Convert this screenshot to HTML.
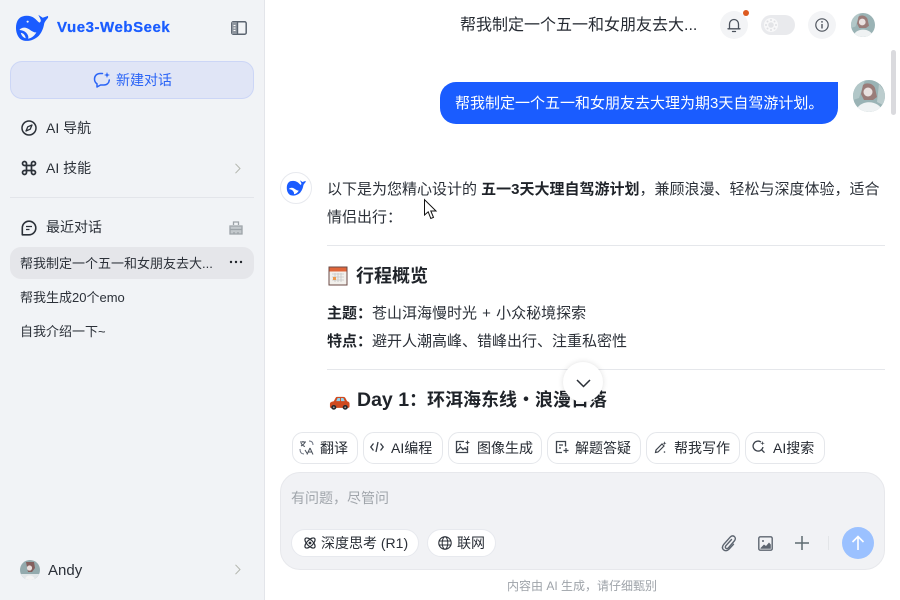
<!DOCTYPE html>
<html lang="zh-CN">
<head>
<meta charset="utf-8">
<title>Vue3-WebSeek</title>
<style>
*{box-sizing:border-box}
html,body{margin:0;padding:0;width:900px;height:600px;overflow:hidden;background:#fff}
body{font-family:"Liberation Sans","Noto Sans CJK SC",sans-serif;color:#1f2329;position:relative}
.a{position:absolute;white-space:nowrap}
svg{display:block;position:absolute;overflow:visible}
.chip{position:absolute;top:432px;height:32px;border:1px solid #e5e7eb;border-radius:11px;background:#fff;font-size:14px;line-height:30px;color:#262b33;white-space:nowrap}
.chip span{position:absolute;top:0}
.pill{position:absolute;top:529px;height:28px;border:1px solid #e7e9ee;border-radius:14px;background:#fff}
</style>
</head>
<body>
<!-- Sidebar -->
<div class="a" style="left:0;top:0;width:265px;height:600px;background:#f1f3f6;border-right:1px solid #e3e5ea"></div>

<svg style="left:15px;top:14px" width="35" height="28" viewBox="0 0 36 28">
<path fill="#1a5cff" d="M1 14C1 7 4 3 8 2C12 .8 17 1.500 20 4C22 5.500 23.500 7.500 25 8.500C26.500 8 27 6.500 26 4.500L24 .5L28.500 3.500L34 1.500L34 3.500C32 6 30.500 7.500 30 9.500C29.500 13 28 18 24.500 22C20 26.500 14 28 9 27C4 26 1 20 1 14Z"/>
<path fill="#f1f3f6" d="M4.500 16C6.500 13.500 10 13 13 14.500C16 16 19 19 22 18.500C20 22 17 24.500 13.500 25C14.500 22.500 12.500 19 9.500 17.300C8 16.500 6 16 4.500 16Z"/>
<path fill="#f1f3f6" d="M6 19C8 19 10.500 21 11 24.500C8.500 24 6.500 21.500 6 19Z"/>
<circle cx="13" cy="7.500" r="1.100" fill="#f1f3f6"/>
</svg>
<div class="a" style="left:57px;top:19px;font-size:15px;line-height:18px;font-weight:700;color:#1a5cff;letter-spacing:.55px;-webkit-text-stroke:.25px #1a5cff">Vue3-WebSeek</div>
<svg style="left:231px;top:21px" width="16" height="14" viewBox="0 0 16 14">
<rect x=".8" y=".8" width="14.400" height="12.400" rx="1.500" fill="none" stroke="#5b6470" stroke-width="1.500"/>
<rect x="1" y="1" width="5" height="12" fill="#8f969f"/>
<path d="M6.500 1V13" stroke="#5b6470" stroke-width="1.400"/>
<path d="M2.500 4.500H4.500M2.500 7H4.500M2.500 9.500H4.500" stroke="#fff" stroke-width="1"/>
</svg>

<div class="a" style="left:10px;top:61px;width:244px;height:38px;border-radius:12px;background:#e0e5f6;border:1px solid #ccd6f6"></div>
<svg style="left:93px;top:71px" width="18" height="18" viewBox="0 0 18 18" fill="none">
<path d="M9.500 2.500H7C3.800 2.500 1.500 4.800 1.500 8C1.500 10 2.400 11.800 4 12.800V16L7.500 14H11C14 14 16 12 16.300 9" stroke="#2a64f6" stroke-width="1.500" stroke-linecap="round" stroke-linejoin="round"/>
<path d="M14 1L14.800 3.300L17 4L14.800 4.800L14 7L13.200 4.800L11 4L13.200 3.300Z" fill="#2a64f6"/>
</svg>
<div class="a" style="left:116px;top:70px;font-size:14px;line-height:20px;color:#2a64f6">新建对话</div>

<svg style="left:21px;top:120px" width="16" height="16" viewBox="0 0 16 16" fill="none">
<circle cx="8" cy="8" r="7" stroke="#2b3038" stroke-width="1.500"/>
<path d="M11 5L9.200 9.200L5 11L6.800 6.800Z" stroke="#2b3038" stroke-width="1.300" stroke-linejoin="round"/>
</svg>
<div class="a" style="left:46px;top:118px;font-size:14px;line-height:20px;color:#2b3038">AI 导航</div>

<svg style="left:21px;top:160px" width="16" height="16" viewBox="0 0 16 16" fill="none">
<path d="M5.500 5.500H10.500V10.500H5.500ZM5.500 5.500V3.500A2 2 0 1 0 3.500 5.500H5.500ZM10.500 5.500H12.500A2 2 0 1 0 10.500 3.500V5.500ZM10.500 10.500V12.500A2 2 0 1 0 12.500 10.500H10.500ZM5.500 10.500H3.500A2 2 0 1 0 5.500 12.500V10.500Z" stroke="#2b3038" stroke-width="1.700"/>
</svg>
<div class="a" style="left:46px;top:158px;font-size:14px;line-height:20px;color:#2b3038">AI 技能</div>
<svg style="left:234px;top:163px" width="8" height="11" viewBox="0 0 8 11" fill="none"><path d="M1.500 .8L6 5.500L1.500 10.200" stroke="#b3b6ae" stroke-width="1"/></svg>

<div class="a" style="left:10px;top:197px;width:244px;height:1px;background:#e3e5ea"></div>

<svg style="left:21px;top:220px" width="16" height="16" viewBox="0 0 16 16" fill="none">
<path d="M8 1.200A6.800 6.800 0 1 1 8 14.800H1.300V8A6.700 6.700 0 0 1 8 1.200Z" stroke="#2b3038" stroke-width="1.600" stroke-linejoin="round"/>
<path d="M5 6.500H11M5 9.500H8.500" stroke="#2b3038" stroke-width="1.300"/>
</svg>
<div class="a" style="left:46px;top:217px;font-size:14px;line-height:20px;color:#2b3038">最近对话</div>
<svg style="left:229px;top:220px" width="14" height="15" viewBox="0 0 14 15" fill="none">
<path d="M1 8L2.500 6H11.500L13 8V14H1Z" fill="#c3c8cc"/>
<path d="M4.500 5V2H9.500V5M1 6H13V14H1ZM1 9.500H13M5 12V14M9 12V14" stroke="#9da3a8" stroke-width="1.300"/>
</svg>

<div class="a" style="left:10px;top:247px;width:244px;height:32px;border-radius:11px;background:#e5e6ea"></div>
<div class="a" style="left:20px;top:255px;font-size:13px;line-height:18px;color:#2b3038">帮我制定一个五一和女朋友去大...</div>
<svg style="left:229px;top:260px" width="14" height="4" viewBox="0 0 14 4"><circle cx="2" cy="2" r="1.200" fill="#20242a"/><circle cx="7" cy="2" r="1.200" fill="#20242a"/><circle cx="12" cy="2" r="1.200" fill="#20242a"/></svg>
<div class="a" style="left:20px;top:289px;font-size:13px;line-height:18px;color:#2b3038">帮我生成20个emo</div>
<div class="a" style="left:20px;top:323px;font-size:13px;line-height:18px;color:#2b3038">自我介绍一下~</div>

<svg style="left:20px;top:560px" width="20" height="20" viewBox="0 0 20 20">
<defs><clipPath id="c1"><circle cx="10" cy="10" r="10"/></clipPath></defs>
<g clip-path="url(#c1)"><rect width="20" height="20" fill="#93aaad"/><rect y="14" width="20" height="6" fill="#e2e6e8"/><path d="M6 2H14L15 8L12 12H8Z" fill="#84605e"/><circle cx="9.500" cy="8" r="2.600" fill="#e8dedc"/><path d="M5 20C5 14 14 14 15 20Z" fill="#f3f3f3"/></g>
</svg>
<div class="a" style="left:48px;top:561px;font-size:15px;line-height:20px;color:#2b3038">Andy</div>
<svg style="left:234px;top:564px" width="8" height="11" viewBox="0 0 8 11" fill="none"><path d="M1.500 .8L6 5.500L1.500 10.200" stroke="#b3b6ae" stroke-width="1"/></svg>

<!-- Header -->
<div class="a" style="left:460px;top:14px;font-size:16px;line-height:24px;color:#262b33">帮我制定一个五一和女朋友去大...</div>
<div class="a" style="left:720px;top:11px;width:28px;height:28px;border-radius:50%;background:#f3f4f6"></div>
<svg style="left:727px;top:17px" width="14" height="16" viewBox="0 0 14 16" fill="none">
<path d="M2.500 11.500V7A4.500 4.500 0 0 1 11.500 7V11.500M1 11.800H13M5.500 14.500H8.500" stroke="#4b525c" stroke-width="1.300" stroke-linecap="round"/>
</svg>
<div class="a" style="left:743px;top:10px;width:6px;height:6px;border-radius:50%;background:#dd5a20"></div>
<div class="a" style="left:761px;top:15px;width:34px;height:20px;border-radius:10px;background:#e9eaed"></div>
<svg style="left:764px;top:18px" width="14" height="14" viewBox="0 0 14 14">
<circle cx="7" cy="7" r="7" fill="#f8f8f9"/><circle cx="7" cy="7" r="2.800" fill="#e3e4e7"/>
<g fill="#dfe0e4"><circle cx="7" cy="2" r="1"/><circle cx="7" cy="12" r="1"/><circle cx="2" cy="7" r="1"/><circle cx="12" cy="7" r="1"/><circle cx="3.500" cy="3.500" r="1"/><circle cx="10.500" cy="3.500" r="1"/><circle cx="3.500" cy="10.500" r="1"/><circle cx="10.500" cy="10.500" r="1"/></g>
</svg>
<div class="a" style="left:808px;top:11px;width:28px;height:28px;border-radius:50%;background:#f3f4f6"></div>
<svg style="left:815px;top:18px" width="14" height="14" viewBox="0 0 14 14" fill="none">
<circle cx="7" cy="7" r="6.200" stroke="#50565f" stroke-width="1.200"/><path d="M7 6V10.500" stroke="#50565f" stroke-width="1.400"/><circle cx="7" cy="3.900" r=".9" fill="#50565f"/>
</svg>
<svg style="left:851px;top:13px" width="24" height="24" viewBox="0 0 32 32">
<defs><clipPath id="c2"><circle cx="16" cy="16" r="16"/></clipPath></defs>
<g clip-path="url(#c2)"><rect width="32" height="32" fill="#9ab3b5"/><path d="M0 0H12L6 18L0 20Z" fill="#b2c7c8"/><path d="M10 5C13 2 20 3 22 8L24 17L20 20H11L8 14Z" fill="#9a7c79"/><circle cx="15" cy="12" r="4.500" fill="#e9e1e0"/><path d="M3 32C4 20 26 18 30 32Z" fill="#eff2f3"/></g>
</svg>

<!-- Scrollbar -->
<div class="a" style="left:891px;top:50px;width:5px;height:65px;border-radius:3px;background:#dadade"></div>

<!-- User message -->
<div class="a" style="left:440px;top:82px;width:398px;height:42px;background:#1a5cff;border-radius:16px 0 16px 16px"></div>
<div class="a" style="left:455px;top:93px;font-size:15px;line-height:21px;color:#fff">帮我制定一个五一和女朋友去大理为期3天自驾游计划。</div>
<svg style="left:853px;top:80px" width="32" height="32" viewBox="0 0 32 32">
<defs><clipPath id="c3"><circle cx="16" cy="16" r="16"/></clipPath></defs>
<g clip-path="url(#c3)"><rect width="32" height="32" fill="#9ab3b5"/><path d="M0 0H12L6 18L0 20Z" fill="#b2c7c8"/><path d="M26 4L32 12V26L24 22Z" fill="#bccdce"/><path d="M10 5C13 2 20 3 22 8L24 17L20 20H11L8 14Z" fill="#9a7c79"/><circle cx="15" cy="12" r="4.500" fill="#e9e1e0"/><path d="M3 32C4 20 26 18 30 32Z" fill="#eff2f3"/></g>
</svg>

<!-- AI message -->
<div class="a" style="left:280px;top:172px;width:32px;height:32px;border-radius:50%;background:#fff;border:1px solid #e7e9ee"></div>
<svg style="left:286px;top:180px" width="21" height="16" viewBox="0 0 36 28">
<path fill="#1a5cff" d="M1 14C1 7 4 3 8 2C12 .8 17 1.500 20 4C22 5.500 23.500 7.500 25 8.500C26.500 8 27 6.500 26 4.500L24 .5L28.500 3.500L34 1.500L34 3.500C32 6 30.500 7.500 30 9.500C29.500 13 28 18 24.500 22C20 26.500 14 28 9 27C4 26 1 20 1 14Z"/>
<path fill="#fff" d="M4.500 16C6.500 13.500 10 13 13 14.500C16 16 19 19 22 18.500C20 22 17 24.500 13.500 25C14.500 22.500 12.500 19 9.500 17.300C8 16.500 6 16 4.500 16Z"/>
</svg>
<div class="a" style="left:327px;top:176px;width:558px;font-size:15px;line-height:28px;color:#2b3038;white-space:normal">以下是为您精心设计的 <b style="color:#1f2329">五一3天大理自驾游计划</b>，兼顾浪漫、轻松与深度体验，适合情侣出行：</div>
<div class="a" style="left:327px;top:245px;width:558px;height:1px;background:#e5e7eb"></div>

<svg style="left:328px;top:266px" width="20" height="20" viewBox="0 0 20 20">
<rect x=".5" y=".5" width="19" height="19" fill="#6b4a44"/><rect x="1.500" y="1.500" width="17" height="17" fill="#f2f0ec"/><rect x="1.500" y="1.500" width="17" height="4" fill="#e0663a"/>
<path d="M4 8H16M4 11H16M4 14H16M7 7V16M10 7V16M13 7V16" stroke="#c6c6c6" stroke-width=".8"/><rect x="5" y="11" width="3" height="3" fill="#ec9a4c"/>
</svg>
<div class="a" style="left:356px;top:264px;font-size:18px;line-height:25px;font-weight:700;color:#1f2329">行程概览</div>

<div class="a" style="left:327px;top:303px;font-size:15px;line-height:21px;color:#2b3038;word-spacing:1px"><b style="color:#1f2329">主题：</b>苍山洱海慢时光 + 小众秘境探索</div>
<div class="a" style="left:327px;top:331px;font-size:15px;line-height:21px;color:#2b3038"><b style="color:#1f2329">特点：</b>避开人潮高峰、错峰出行、注重私密性</div>
<div class="a" style="left:327px;top:369px;width:558px;height:1px;background:#e5e7eb"></div>

<svg style="left:329px;top:396px" width="21" height="14" viewBox="0 0 22 16" preserveAspectRatio="none">
<path d="M1 9C1 7 3 6.500 5 6L7 2C7.500 1 8 1 9 1H15C16 1 16.500 1.500 17 2L19 6C20.500 6.500 21.500 7 21.500 9V12C21.500 13 21 13.500 20 13.500H2C1 13.500 1 13 1 12Z" fill="#cf4a1f"/>
<path d="M7.500 5.800L9 2.300H11.500V5.800ZM12.500 5.800V2.300H15L16.500 5.800Z" fill="#8ed2ee"/>
<circle cx="5" cy="13" r="2.700" fill="#27282c"/><circle cx="17" cy="13" r="2.700" fill="#27282c"/><circle cx="5" cy="13" r="1" fill="#9a9a9a"/><circle cx="17" cy="13" r="1" fill="#9a9a9a"/>
</svg>
<div class="a" style="left:357px;top:388px;font-size:18px;line-height:25px;font-weight:700;color:#1f2329"><span style="font-size:19.500px">Day 1</span>：环洱海东线・浪漫日落</div>

<!-- Scroll-down button -->
<div class="a" style="left:563px;top:362px;width:40px;height:40px;border-radius:50%;background:#fff;box-shadow:0 0 6px rgba(0,0,0,.13)"></div>
<svg style="left:576px;top:379px" width="15" height="9" viewBox="0 0 15 9" fill="none"><path d="M1 1L7.500 7.500L14 1" stroke="#2b3038" stroke-width="1.500"/></svg>

<!-- Bottom backdrop -->
<div class="a" style="left:265px;top:412px;width:630px;height:188px;background:#fff"></div>

<!-- Chips -->
<div class="chip" style="left:292px;width:66px"><span style="left:27px">翻译</span></div>
<svg style="left:299px;top:440px" width="15" height="15" viewBox="0 0 15 15" fill="none">
<path d="M1 2H7M4 1V2M2 6C4 5 5.500 3.500 6 2M2 3C3 5 4 6 6 6.500" stroke="#4b525c" stroke-width="1"/>
<path d="M6 10L8.500 14M11 8L8 14.500M9.200 12H13M11 8L14 14.500" stroke="#4b525c" stroke-width="1"/>
<path d="M1 9C1 12 2 14 5 14M10 1C12 1 14 2 14 5" stroke="#6b7280" stroke-width="1"/>
</svg>
<div class="chip" style="left:363px;width:80px"><span style="left:27px">AI编程</span></div>
<svg style="left:370px;top:441px" width="14" height="12" viewBox="0 0 14 12" fill="none">
<path d="M3.500 2.500L.8 6L3.500 9.500M10.500 2.500L13.200 6L10.500 9.500M8 1L6 11" stroke="#343a43" stroke-width="1.300"/>
</svg>
<div class="chip" style="left:448px;width:94px"><span style="left:28px">图像生成</span></div>
<svg style="left:455px;top:440px" width="15" height="14" viewBox="0 0 15 14" fill="none">
<path d="M9 1.500H1.500V12.500H12.500V6" stroke="#3d434c" stroke-width="1.300"/>
<path d="M2 11L5.500 7L8 9.500L10 8L12 10" stroke="#3d434c" stroke-width="1.300"/><circle cx="5" cy="4.500" r="1" fill="#3d434c"/>
<path d="M12.500 0L13.200 1.800L15 2.500L13.200 3.200L12.500 5L11.800 3.200L10 2.500L11.800 1.800Z" fill="#3d434c"/>
</svg>
<div class="chip" style="left:547px;width:94px"><span style="left:27px">解题答疑</span></div>
<svg style="left:555px;top:440px" width="14" height="14" viewBox="0 0 14 14" fill="none">
<path d="M7 12.500H1.500V1.500H10.500V6.500" stroke="#3d434c" stroke-width="1.300"/><path d="M4 5H8M4 8H6" stroke="#3d434c" stroke-width="1.200"/><path d="M11 8V13M8.500 10.500H13.500" stroke="#3d434c" stroke-width="1.200"/>
</svg>
<div class="chip" style="left:646px;width:94px"><span style="left:27px">帮我写作</span></div>
<svg style="left:654px;top:441px" width="13" height="13" viewBox="0 0 13 13" fill="none">
<path d="M1.500 11.500L2 9L8 3L10 5L4 11Z" stroke="#3d434c" stroke-width="1.200"/><path d="M10.500 .3L11 1.700L12.500 2.200L11 2.800L10.500 4L10 2.800L8.700 2.200L10 1.700Z" fill="#3d434c"/><circle cx="10.500" cy="11" r=".8" fill="#3d434c"/>
</svg>
<div class="chip" style="left:745px;width:80px"><span style="left:27px">AI搜索</span></div>
<svg style="left:752px;top:440px" width="14" height="14" viewBox="0 0 14 14" fill="none">
<path d="M9 2A5 5 0 1 0 11 7" stroke="#3d434c" stroke-width="1.300"/><path d="M9.800 10L12.500 12.700" stroke="#3d434c" stroke-width="1.300"/><path d="M10.500 1L11 2.700L12.800 3.200L11 3.800L10.500 5.500L10 3.800L8.300 3.200L10 2.700Z" fill="#3d434c"/>
</svg>

<!-- Input box -->
<div class="a" style="left:280px;top:472px;width:605px;height:98px;border-radius:20px;background:#f1f2f5;border:1px solid #e7e8ec"></div>
<div class="a" style="left:291px;top:488px;font-size:14px;line-height:20px;color:#a0a5ab">有问题，尽管问</div>

<div class="pill" style="left:291px;width:128px"></div>
<svg style="left:303px;top:536px" width="14" height="14" viewBox="0 0 14 14" fill="none">
<ellipse cx="7" cy="7" rx="6.500" ry="3" transform="rotate(45 7 7)" stroke="#2b3038" stroke-width="1.200"/>
<ellipse cx="7" cy="7" rx="6.500" ry="3" transform="rotate(-45 7 7)" stroke="#2b3038" stroke-width="1.200"/>
<circle cx="7" cy="7" r="1.400" fill="#2b3038"/>
</svg>
<div class="a" style="left:321px;top:534px;font-size:14px;line-height:18px;color:#2b3038">深度思考 (R1)</div>
<div class="pill" style="left:427px;width:69px"></div>
<svg style="left:438px;top:536px" width="14" height="14" viewBox="0 0 14 14" fill="none">
<circle cx="7" cy="7" r="6.200" stroke="#2b3038" stroke-width="1.100"/><ellipse cx="7" cy="7" rx="2.800" ry="6.200" stroke="#2b3038" stroke-width="1"/><path d="M1 5H13M1 9H13" stroke="#2b3038" stroke-width="1"/>
</svg>
<div class="a" style="left:457px;top:534px;font-size:14px;line-height:18px;color:#2b3038">联网</div>

<svg style="left:721px;top:535px" width="16" height="17" viewBox="0 0 16 17" fill="none">
<path d="M10.500 4.500L4.800 10.800C4 11.800 4.300 12.800 5 13.300C5.800 13.800 6.800 13.500 7.500 12.700L13.300 6C14.800 4.200 14.600 2.500 13.300 1.500C12 .6 10.300 .9 9 2.300L2.800 9.300C1 11.500 1.200 13.500 2.500 14.800C4 16.200 6.300 16 8 14.200L12.500 9.300" stroke="#5d6570" stroke-width="1.400" stroke-linecap="round"/>
</svg>
<svg style="left:758px;top:536px" width="15" height="15" viewBox="0 0 15 15" fill="none">
<rect x=".8" y=".8" width="13.400" height="13.400" rx="1.500" stroke="#5d6570" stroke-width="1.400"/><path d="M2.500 12L6 8.500L8 10L11 6.500L12.800 8.500V12.800H2.500Z" fill="#5d6570"/><circle cx="5" cy="5" r="1" fill="#5d6570"/>
</svg>
<svg style="left:795px;top:536px" width="14" height="14" viewBox="0 0 14 14" fill="none"><path d="M7 0V14M0 7H14" stroke="#5d6b70" stroke-width="1.500"/></svg>
<div class="a" style="left:828px;top:536px;width:1px;height:14px;background:#e3e5e8"></div>
<div class="a" style="left:842px;top:527px;width:32px;height:32px;border-radius:50%;background:#9bc1ff"></div>
<svg style="left:851px;top:535px" width="14" height="16" viewBox="0 0 14 16" fill="none"><path d="M7 15V1.500M1.500 7L7 1.500L12.500 7" stroke="#fff" stroke-width="1.600"/></svg>

<div class="a" style="left:507px;top:578px;font-size:12px;line-height:16px;color:#9ea3a9">内容由 AI 生成，请仔细甄别</div>

<!-- Cursor -->
<svg style="left:424px;top:199px" width="14" height="21" viewBox="0 0 14 21">
<path d="M.5 .7V16L4.200 12.800L6.800 19.500L9.500 18.400L6.800 12H12Z" fill="#fff" stroke="#111" stroke-width="1"/>
</svg>
</body>
</html>
